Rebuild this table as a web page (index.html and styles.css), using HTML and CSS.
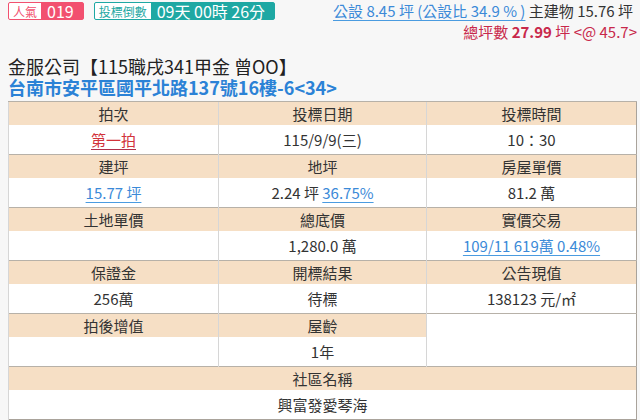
FILE: index.html
```html
<!DOCTYPE html>
<html lang="zh-Hant">
<head>
<meta charset="utf-8">
<link rel="stylesheet" href="styles.css">
</head>
<body>
<div class="page">
  <div class="topbar">
    <div class="badges">
      <span class="badge badge-pink"><span class="b-label">人氣</span><span class="b-value">019</span></span>
      <span class="badge badge-teal"><span class="b-label">投標倒數</span><span class="b-value">09天 00時 26分</span></span>
    </div>
    <div class="area"><a class="link" href="#">公設 8.45 坪 (公設比 34.9 % )</a> 主建物 15.76 坪</div>
  </div>
  <div class="total">總坪數 <b>27.99</b> 坪 &lt;@ 45.7&gt;</div>
  <div class="title">金服公司【115職戌341甲金 曾OO】</div>
  <div class="addr">台南市安平區國平北路137號16樓-6&lt;34&gt;</div>
  <table class="info">
    <colgroup><col class="c1"><col class="c2"><col class="c3"></colgroup>
    <tr class="hd"><td>拍次</td><td>投標日期</td><td>投標時間</td></tr>
    <tr class="dt"><td><a class="link red" href="#">第一拍</a></td><td>115/9/9(三)</td><td>10：30</td></tr>
    <tr class="hd"><td>建坪</td><td>地坪</td><td>房屋單價</td></tr>
    <tr class="dt"><td><a class="link" href="#">15.77 坪</a></td><td>2.24 坪 <a class="link" href="#">36.75%</a></td><td>81.2 萬</td></tr>
    <tr class="hd"><td>土地單價</td><td>總底價</td><td>實價交易</td></tr>
    <tr class="dt"><td></td><td>1,280.0 萬</td><td><a class="link" href="#">109/11 619萬 0.48%</a></td></tr>
    <tr class="hd"><td>保證金</td><td>開標結果</td><td>公告現值</td></tr>
    <tr class="dt"><td>256萬</td><td>待標</td><td>138123 元/㎡</td></tr>
    <tr class="hd"><td>拍後增值</td><td>屋齡</td><td class="blank" rowspan="2"></td></tr>
    <tr class="dt"><td></td><td>1年</td></tr>
    <tr class="hd"><td colspan="3">社區名稱</td></tr>
    <tr class="dt"><td colspan="3">興富發愛琴海</td></tr>
  </table>
</div>
</body>
</html>
```
FILE: styles.css
```css
html, body {
  margin: 0;
  padding: 0;
  background: #f7f7f7;
}
body {
  font-family: "Noto Sans CJK TC", "Noto Sans", sans-serif;
  color: #333;
  font-size: 15px;
}
.page {
  width: 629px;
  padding: 2px 3px 0 8px;
}
.topbar {
  display: flex;
  justify-content: space-between;
  align-items: flex-start;
  height: 18px;
}
.badges {
  display: flex;
  gap: 10px;
}
.badge {
  display: inline-flex;
  align-items: stretch;
  height: 18px;
  box-sizing: border-box;
  border: 1px solid;
  border-radius: 2px;
  background: #fff;
}
.b-label {
  display: flex;
  align-items: center;
  font-size: 12px;
  padding: 0 4px;
}
.b-value {
  display: flex;
  align-items: center;
  color: #fff;
  font-size: 16px;
  padding: 0 9px 0 6px;
}
.badge-pink { border-color: #f2506f; color: #f2506f; }
.badge-pink .b-value { background: #f2506f; }
.badge-teal { border-color: #1ea8a3; color: #1ea8a3; }
.badge-teal .b-value { background: #1ea8a3; }
.area {
  font-size: 15px;
  line-height: 18px;
  color: #333;
  margin-right: 4px;
}
.link {
  color: #3b8ad8;
  text-decoration: underline;
  text-decoration-color: #4a9be0;
  text-underline-offset: 3px;
  text-decoration-thickness: 1px;
}
.link.red {
  color: #d2333b;
  text-decoration-color: #b0304a;
}
.total {
  text-align: right;
  color: #c8284a;
  font-size: 15px;
  line-height: 22px;
  margin-top: 1px;
}
.total b { font-weight: 700; }
.title {
  font-size: 18px;
  color: #222;
  line-height: 21px;
  margin-top: 13px;
}
.addr {
  font-size: 18px;
  color: #2b82d6;
  font-weight: 700;
  line-height: 21px;
}
.info {
  width: 629px;
  border-collapse: collapse;
  margin-top: 3px;
  background: #fff;
  border: 1px solid #a9a39b;
  table-layout: fixed;
}
.c1 { width: 210px; }
.c2 { width: 208px; }
.c3 { width: 210px; }
.info td {
  text-align: center;
  padding: 0;
  line-height: 20px;
  border-left: 1px solid #d6d6d6;
}
.info tr.hd td {
  background: #f6dfc5;
  height: 23px;
  border-top: 1px solid #b7b1a8;
  color: #333;
}
.info tr.dt td {
  height: 29px;
  background: #fff;
}
.info td.blank {
  background: #fff !important;
}
```
